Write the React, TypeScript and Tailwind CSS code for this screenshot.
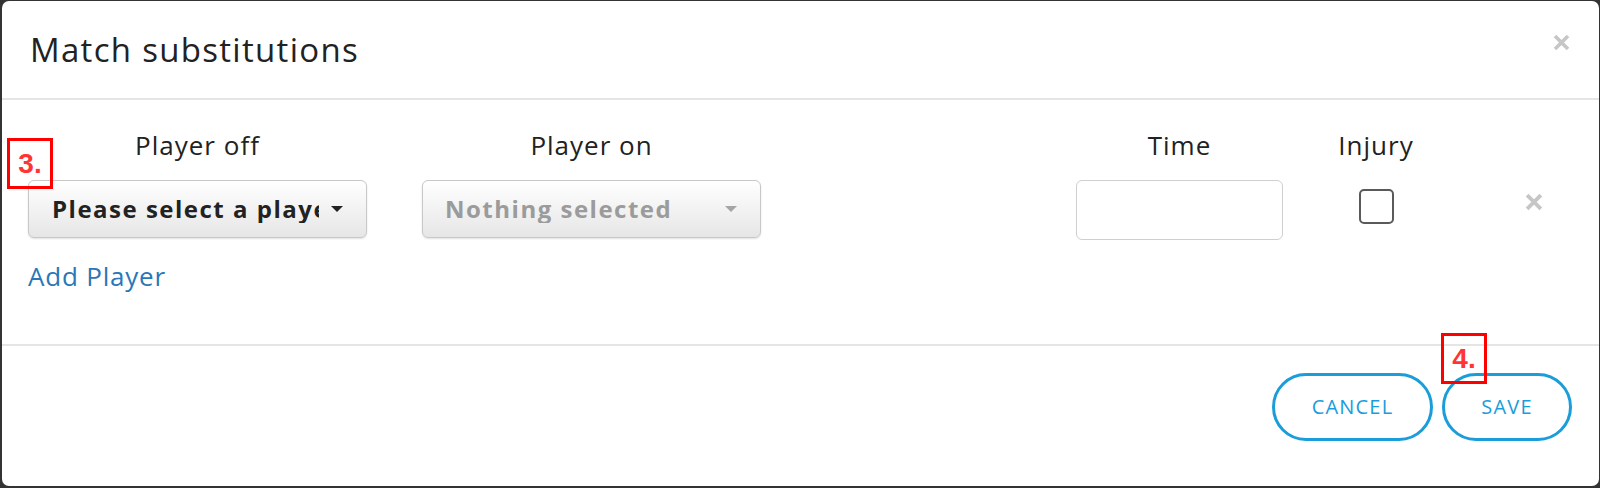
import React from 'react';

const sans = "font-['Open_Sans',sans-serif]";

function CloseIcon({ className = '', size = 17 }: { className?: string; size?: number }) {
  return (
    <svg width={size} height={size} viewBox="0 0 17 17" className={className}>
      <path d="M2 2 L15 15 M15 2 L2 15" stroke="#c6c6c6" strokeWidth="3.6" strokeLinecap="butt" />
    </svg>
  );
}

function Caret({ color }: { color: string }) {
  return (
    <span
      className="inline-block h-0 w-0 shrink-0 border-x-[6px] border-t-[6px] border-x-transparent"
      style={{ borderTopColor: color }}
    />
  );
}

function Marker({ label, className }: { label: string; className: string }) {
  return (
    <div
      className={`absolute flex h-[51px] w-[46px] items-center justify-center border-[3px] border-[#ff0000] font-['Liberation_Sans',Arial,sans-serif] text-[28px] leading-[28px] font-bold text-[#ff3434] ${className}`}
    >
      {label}
    </div>
  );
}

export default function App() {
  return (
    <div className="h-[488px] w-[1600px] bg-[#333] pt-[1px] pr-[1px] pb-[2px] pl-[2px]">
      <div className={`relative flex h-full flex-col rounded-[7px] bg-white text-[#222] ${sans}`}>
        {/* header */}
        <div className="flex h-[99px] items-center justify-between border-b-2 border-[#e5e5e5] pr-[29px] pl-[28px]">
          <h1 className="text-[33px] leading-[33px] font-normal tracking-[1.3px]">Match substitutions</h1>
          <CloseIcon className="mb-[14px] self-center" />
        </div>

        {/* body */}
        <div className="h-[246px] border-b-2 border-[#e5e5e5] pt-[32px] pl-[26px]">
          <div className="flex items-start">
            <div className="flex w-[339px] flex-col items-center">
              <span className="text-[26px] leading-[26px] tracking-[1px]">Player off</span>
              <button className="mt-[22px] flex h-[58px] w-full items-center rounded-[6px] border border-[#c8c8c8] bg-linear-to-b from-white to-[#e6e6e6] pr-[23px] pl-[23px] shadow-[0_1px_2px_rgba(0,0,0,0.12)]">
                <span className="flex-1 overflow-hidden text-left text-[24px] leading-[28px] font-bold tracking-[1.5px] whitespace-nowrap text-[#222]">
                  Please select a player
                </span>
                <span className="ml-[12px] flex">
                  <Caret color="#222" />
                </span>
              </button>
            </div>

            <div className="ml-[55px] flex w-[339px] flex-col items-center">
              <span className="text-[26px] leading-[26px] tracking-[1px]">Player on</span>
              <button className="mt-[22px] flex h-[58px] w-full items-center rounded-[6px] border border-[#c8c8c8] bg-linear-to-b from-white to-[#e6e6e6] pr-[23px] pl-[22px] shadow-[0_1px_2px_rgba(0,0,0,0.12)]">
                <span className="flex-1 overflow-hidden text-left text-[24px] leading-[28px] font-bold tracking-[1.5px] whitespace-nowrap text-[#9b9b9b]">
                  Nothing selected
                </span>
                <Caret color="#a5a5a5" />
              </button>
            </div>

            <div className="ml-[315px] flex w-[207px] flex-col items-center">
              <span className="text-[26px] leading-[26px] tracking-[1px]">Time</span>
              <input className="mt-[22px] h-[60px] w-full rounded-[6px] border-[1.5px] border-[#cfcfcf] bg-white outline-none" />
            </div>

            <div className="flex w-[186px] flex-col items-center">
              <span className="text-[26px] leading-[26px] tracking-[1px]">Injury</span>
              <span className="mt-[31px] h-[35px] w-[35px] rounded-[5px] border-2 border-[#5a5a5a] bg-white" />
            </div>

            <div className="mt-[61px] ml-[56px]">
              <CloseIcon size={18} />
            </div>
          </div>

          <a className="mt-[23px] block text-[26px] leading-[26px] tracking-[0.8px] text-[#2a77b8]">Add Player</a>
        </div>

        {/* footer */}
        <div className="flex justify-end gap-[9px] pt-[27px] pr-[27px]">
          <button className="flex h-[68px] w-[161px] items-center justify-center rounded-full border-[3px] border-[#1a9dd9] text-[20px] tracking-[1.2px] text-[#1a9dd9]">
            CANCEL
          </button>
          <button className="flex h-[68px] w-[130px] items-center justify-center rounded-full border-[3px] border-[#1a9dd9] text-[20px] tracking-[1.2px] text-[#1a9dd9]">
            SAVE
          </button>
        </div>

        <Marker label="3." className="top-[137px] left-[5px]" />
        <Marker label="4." className="top-[332px] left-[1439px] h-[50px]" />
      </div>
    </div>
  );
}
